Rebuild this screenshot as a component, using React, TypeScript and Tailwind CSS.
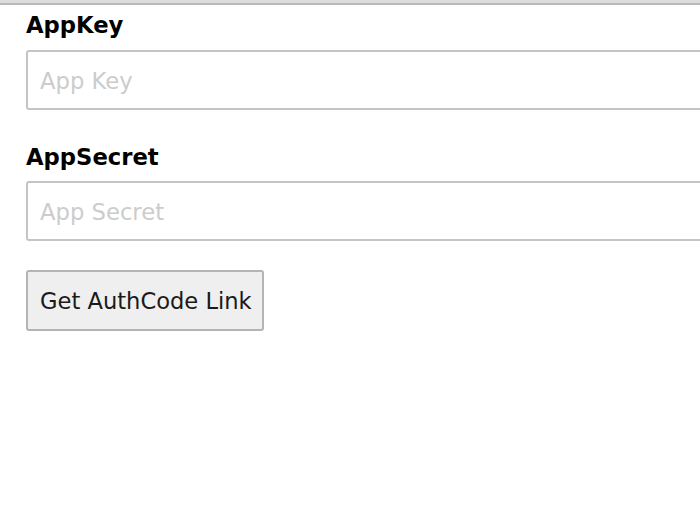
import React from "react";

export default function App() {
  const font = { fontFamily: '"DejaVu Sans", Verdana, sans-serif' };
  return (
    <div className="min-h-[525px] w-[700px] overflow-hidden bg-white" style={font}>
      <div className="h-[5px] border-b-2 border-[#b8b8b8] bg-[#dcdcdc]" />
      <div className="pl-[26px]">
        <label className="mt-[7px] block text-[22.7px] leading-[26px] font-bold text-black">AppKey</label>
        <input
          placeholder="App Key"
          className="mt-[12px] block h-[60px] w-[700px] rounded-[3px] border-2 border-[#c4c4c4] bg-white px-[12px] pt-[2px] text-[22.7px] text-black placeholder:text-[#cccccc] outline-none"
        />
        <label className="mt-[34px] block text-[22.7px] leading-[26px] font-bold text-black">AppSecret</label>
        <input
          placeholder="App Secret"
          className="mt-[11px] block h-[60px] w-[700px] rounded-[3px] border-2 border-[#c4c4c4] bg-white px-[12px] pt-[2px] text-[22.7px] text-black placeholder:text-[#cccccc] outline-none"
        />
        <button className="mt-[29px] block h-[61px] w-[238px] rounded-[3px] border-2 border-[#b4b4b4] bg-[#efefef] pl-[12px] pt-[2px] text-left text-[22.6px] text-[#1a1a1a]">
          Get AuthCode Link
        </button>
      </div>
    </div>
  );
}
